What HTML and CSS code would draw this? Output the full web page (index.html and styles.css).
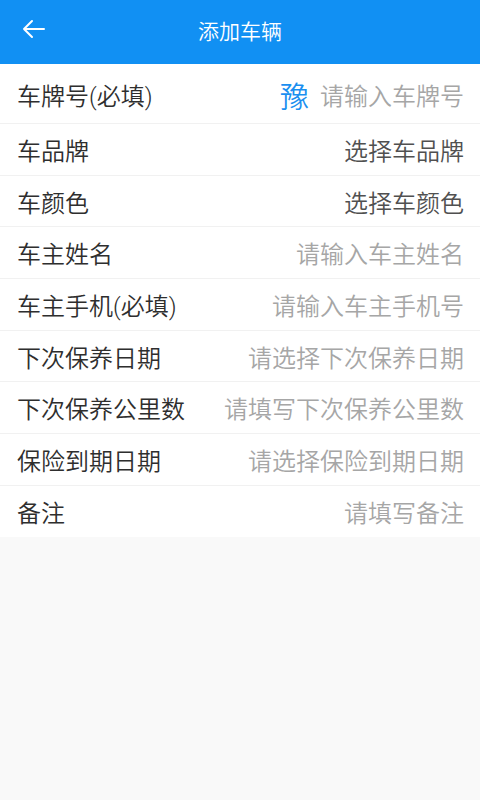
FILE: index.html
```html
<!DOCTYPE html>
<html lang="zh-CN">
<head>
    <meta charset="UTF-8">
    <meta name="viewport" content="width=device-width, initial-scale=1.0">
    <title>添加车辆</title>
    <link rel="stylesheet" href="styles.css">
</head>
<body>
    <div class="header">
        <div class="back">
            <svg width="24" height="20" viewBox="0 0 24 20">
                <path d="M22 10H2M10 2L2 10L10 18" fill="none" stroke="#fff" stroke-width="2" stroke-linecap="round" stroke-linejoin="round"/>
            </svg>
        </div>
        <div class="title">添加车辆</div>
    </div>

    <div class="form">
        <div class="row first">
            <span class="label">车牌号(必填)</span>
            <span class="value"><span class="province">豫</span><span class="hint">请输入车牌号</span></span>
        </div>
        <div class="row">
            <span class="label">车品牌</span>
            <span class="value pick">选择车品牌</span>
        </div>
        <div class="row">
            <span class="label">车颜色</span>
            <span class="value pick">选择车颜色</span>
        </div>
        <div class="row">
            <span class="label">车主姓名</span>
            <span class="value hint">请输入车主姓名</span>
        </div>
        <div class="row">
            <span class="label">车主手机(必填)</span>
            <span class="value hint">请输入车主手机号</span>
        </div>
        <div class="row">
            <span class="label">下次保养日期</span>
            <span class="value hint">请选择下次保养日期</span>
        </div>
        <div class="row">
            <span class="label">下次保养公里数</span>
            <span class="value hint">请填写下次保养公里数</span>
        </div>
        <div class="row">
            <span class="label">保险到期日期</span>
            <span class="value hint">请选择保险到期日期</span>
        </div>
        <div class="row last">
            <span class="label">备注</span>
            <span class="value hint">请填写备注</span>
        </div>
    </div>
</body>
</html>
```

FILE: styles.css
```css
body {
    margin: 0;
    background: #f9f9f9;
    font-family: Roboto, "Noto Sans CJK SC", sans-serif;
    font-weight: 350;
    color: #333;
}

.header {
    height: 64px;
    background: #1190f3;
    display: flex;
    align-items: center;
    justify-content: center;
    position: relative;
}

.back {
    position: absolute;
    left: 22px;
    top: 19px;
    width: 24px;
    height: 20px;
}

.back svg {
    display: block;
}

.title {
    color: #fff;
    font-size: 21px;
    margin-top: -5px;
}

.form {
    background: #fff;
}

.row {
    height: 51.7px;
    box-sizing: border-box;
    border-bottom: 1px solid #f1f1f1;
    padding: 0 16px 0 17px;
    display: flex;
    align-items: center;
    justify-content: space-between;
    font-size: 24px;
}

.row.first {
    height: 60px;
    padding-top: 2px;
}

.row.last {
    border-bottom: none;
    height: 51px;
}

.label {
    color: #2e2e2e;
}

.value {
    display: flex;
    align-items: center;
}

.pick {
    color: #505050;
}

.hint {
    color: #a6a6a6;
}

.province {
    color: #1a8ff0;
    font-size: 29px;
    margin-right: 11px;
}
```
